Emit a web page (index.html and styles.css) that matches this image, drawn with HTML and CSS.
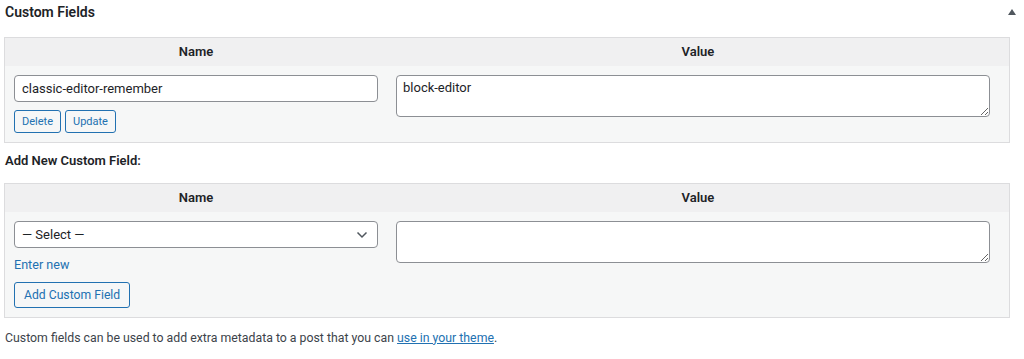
FILE: index.html
```html
<!DOCTYPE html>
<html lang="en">
<head>
<meta charset="utf-8">
<title>Custom Fields</title>
<link rel="stylesheet" href="styles.css">
</head>
<body>
<div class="postbox">
  <div class="postbox-header">
    <h2 class="postbox-title">Custom Fields</h2>
    <span class="toggle-arrow" aria-hidden="true"></span>
  </div>
  <div class="inside">
    <div class="meta-table">
      <div class="meta-head">
        <div class="col-left">Name</div>
        <div class="col-right">Value</div>
      </div>
      <div class="meta-row">
        <div class="col-left cell">
          <input class="text-input" type="text" value="classic-editor-remember">
          <div class="button-row">
            <button class="btn btn-small">Delete</button>
            <button class="btn btn-small">Update</button>
          </div>
        </div>
        <div class="col-right cell">
          <textarea class="value-area">block-editor</textarea>
        </div>
      </div>
    </div>

    <p class="add-title">Add New Custom Field:</p>

    <div class="meta-table">
      <div class="meta-head">
        <div class="col-left">Name</div>
        <div class="col-right">Value</div>
      </div>
      <div class="meta-row">
        <div class="col-left cell">
          <div class="select-wrap">
            <select class="select-input"><option>— Select —</option></select>
            <svg class="select-chevron" width="12" height="8" viewBox="0 0 12 8"><path d="M1.5 1.5 L6 6 L10.5 1.5" fill="none" stroke="#50575e" stroke-width="1.5"/></svg>
          </div>
          <a class="enter-new" href="#">Enter new</a>
          <button class="btn btn-add">Add Custom Field</button>
        </div>
        <div class="col-right cell">
          <textarea class="value-area value-area-new"></textarea>
        </div>
      </div>
    </div>

    <p class="footnote">Custom fields can be used to add extra metadata to a post that you can <a href="#">use in your theme</a>.</p>
  </div>
</div>
</body>
</html>
```

FILE: styles.css
```css
* { box-sizing: border-box; }

body {
  margin: 0;
  background: #fff;
  color: #1d2327;
  font-family: Roboto, "Noto Sans", sans-serif;
  font-size: 13px;
  line-height: 1.4;
}

.postbox-header {
  display: flex;
  align-items: center;
  justify-content: space-between;
  height: 25px;
  padding: 0 8px 0 5px;
}

.postbox-title {
  margin: 0;
  font-size: 14px;
  font-weight: 600;
  color: #1d2327;
}

.toggle-arrow {
  width: 0;
  height: 0;
  border-left: 4px solid transparent;
  border-right: 4px solid transparent;
  border-bottom: 6px solid #50575e;
  margin-top: -2px;
}

.inside {
  padding: 12px 14px 0 4px;
}

.meta-table {
  border: 1px solid #dcdcde;
}

.meta-head {
  display: grid;
  grid-template-columns: 382px 1fr;
  background: #f0f0f1;
  height: 28px;
  align-items: center;
  font-weight: 600;
  text-align: center;
}

.meta-row {
  display: grid;
  grid-template-columns: 382px 1fr;
  background: #f6f7f7;
}

.cell {
  padding: 9px;
}

.col-right.cell {
  padding-right: 19px;
}

.text-input,
.select-input,
.value-area {
  display: block;
  width: 100%;
  font-family: inherit;
  font-size: 13px;
  color: #1d2327;
  background: #fff;
  border: 1px solid #8c8f94;
  border-radius: 4px;
}

.text-input {
  height: 27px;
  padding: 0 7px;
}

.value-area {
  height: 42px;
  padding: 3px 6px;
  resize: vertical;
  line-height: 1.4;
}

.value-area-new {
  height: 42px;
}

.button-row {
  display: flex;
  gap: 4px;
  margin-top: 8px;
}

.btn {
  font-family: inherit;
  color: #2271b1;
  background: #f6f7f7;
  border: 1px solid #2271b1;
  border-radius: 3px;
  cursor: pointer;
}

.btn-small {
  height: 23px;
  padding: 0 7px;
  font-size: 11px;
}

.select-wrap {
  position: relative;
}

.select-input {
  height: 27px;
  padding: 0 24px 0 7px;
  appearance: none;
  -webkit-appearance: none;
}

.select-chevron {
  position: absolute;
  right: 10px;
  top: 10px;
  pointer-events: none;
}

.enter-new {
  display: block;
  margin-top: 8px;
  color: #2271b1;
  text-decoration: none;
  font-size: 12.6px;
}

.btn-add {
  display: block;
  margin-top: 8px;
  height: 26px;
  padding: 0 9px;
  font-size: 12.2px;
}

.add-title {
  margin: 9px 1px 13px;
  font-weight: 600;
}

.footnote {
  margin: 12px 1px;
  color: #3c434a;
  font-size: 12.3px;
}

.footnote a {
  color: #2271b1;
  text-decoration: underline;
}
```
